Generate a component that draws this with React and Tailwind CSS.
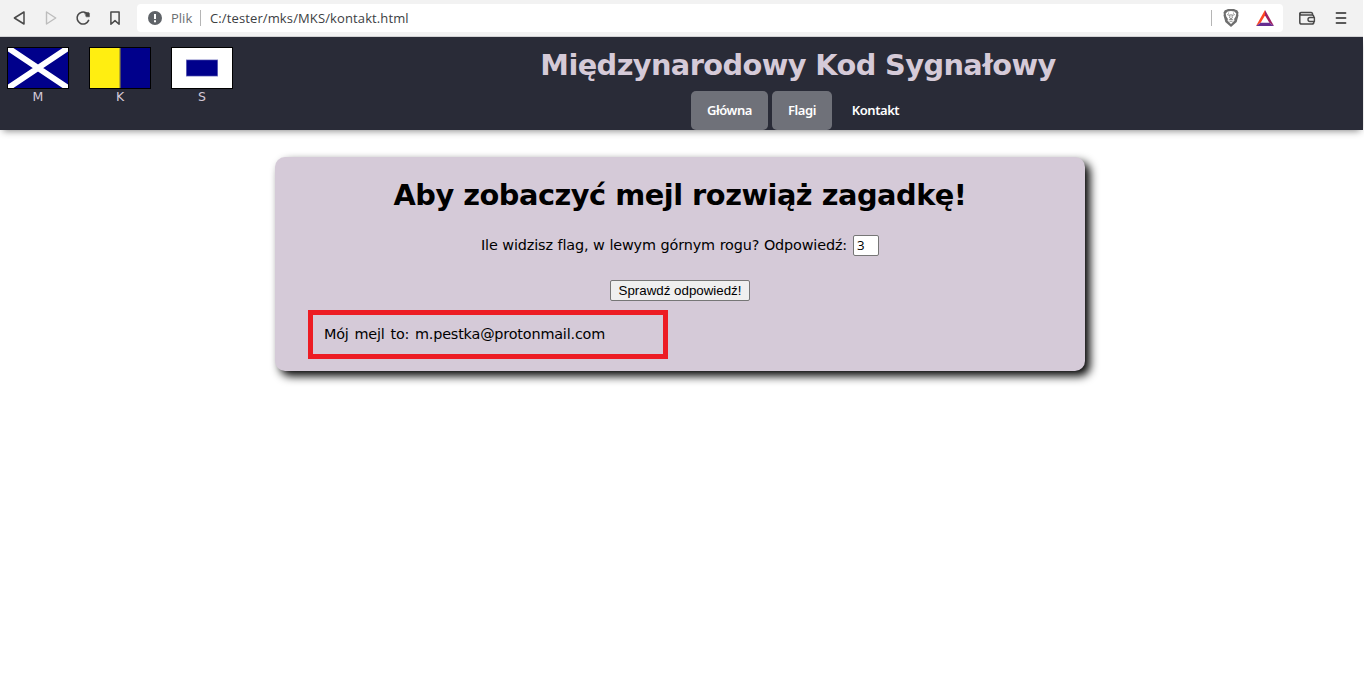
import React from "react";

function BrowserBar() {
  return (
    <div className="flex h-[37px] items-start border-b border-[#d4d4d6] bg-[#f2f2f2] pt-1 font-['Open_Sans',sans-serif] text-[#3c4043]">
      <div className="flex h-7 w-[137px] shrink-0 items-center">
        <svg width="137" height="28" viewBox="0 4 137 28" fill="none" strokeLinejoin="round" strokeLinecap="round">
          <path d="M24 12v12l-9.6-6z" stroke="#4a4a4a" strokeWidth="1.5" />
          <path d="M46.5 12v12l9.2-6z" stroke="#bdbdbd" strokeWidth="1.4" />
          <path d="M88.6 20.4A6 6 0 1 1 86.2 12.9" stroke="#4a4a4a" strokeWidth="1.6" />
          <path d="M85 12.8l3.6-.4.8.8v3.6h-3z" fill="#4a4a4a" stroke="#4a4a4a" strokeWidth=".6" />
          <path d="M110.9 12.1h8.2v12.2l-4.1-3.7-4.1 3.7z" stroke="#4a4a4a" strokeWidth="1.5" />
        </svg>
      </div>
      <div className="flex h-7 w-[1146px] shrink-0 items-center rounded bg-white">
        <svg className="ml-[11px] shrink-0" width="14" height="14" viewBox="0 0 14 14">
          <circle cx="7" cy="7" r="7" fill="#5f6368" />
          <path d="M6 3h2v5H6zM6 9.3h2v2H6z" fill="#fff" />
        </svg>
        <span className="ml-[9px] w-[29px] shrink-0 whitespace-nowrap text-[13px] leading-7 text-[#6b6f73]">Plik</span>
        <span className="h-4 w-px shrink-0 bg-[#b5b5b5]" />
        <span className="ml-[9px] whitespace-nowrap text-[13px] leading-7 tracking-[0.12px]">C:/tester/mks/MKS/kontakt.html</span>
        <span className="ml-auto h-4 w-px shrink-0 bg-[#b5b5b5]" />
        <svg className="ml-[11px] shrink-0" width="16" height="18" viewBox="0 0 16 18">
          <path d="M3.4.8L5 0h6l1.6.8 1.6.4 1.4 2.6-.5 1.3.4 1.2-1.8 6.8L8 18l-5.7-4.9L.5 6.3l.4-1.2-.5-1.3 1.4-2.6z" fill="#6e6e6e" />
          <path d="M4.7 2.6L8 2l3.3.6 2 2-.6 3-1.6 2.3.4 1.5L8 14.9l-3.5-3.5.4-1.5-1.6-2.3-.6-3z" fill="#fff" />
          <path d="M4.2 5.5l2.5 1M11.8 5.5l-2.5 1M7.2 5l-.5 4L8 10l1.3-1-.5-4M5.8 11L8 10l2.2 1M8 10v1M6.5 12.8L8 12l1.5.8M5 3.8l1 .7M11 3.8l-1 .7" stroke="#6e6e6e" strokeWidth=".75" fill="none" />
        </svg>
        <svg className="mr-[9px] ml-[17px] shrink-0" width="18" height="16" viewBox="0 0 18 16">
          <path d="M9 0v5.5L4.6 12.7 0 16z" fill="#ff4724" />
          <path d="M9 0l9 16-4.6-3.3L9 5.5z" fill="#9e1f63" />
          <path d="M0 16h18l-4.6-3.3H4.6z" fill="#662d91" />
        </svg>
      </div>
      <div className="flex h-7 grow items-center">
        <svg width="80" height="28" viewBox="1283 4 80 28" fill="none" strokeLinejoin="round">
          <path d="M1312.5 14.8v-1.2a1.4 1.4 0 0 0-1.4-1.1h-10.2a1.1 1.1 0 0 0-1.1 1.1v8.6a1.9 1.9 0 0 0 1.9 1.9h10.2a1.9 1.9 0 0 0 1.9-1.9v-5.5a1.7 1.7 0 0 0-1.7-1.7h-10.6a1.6 1.6 0 0 1-1.6-1.4" stroke="#4a4a4a" strokeWidth="1.5" />
          <path d="M1314.4 17.5h-4.4a2 2 0 0 0 0 4h4.4z" stroke="#4a4a4a" strokeWidth="1.4" fill="#f2f2f2" />
          <path d="M1336.5 13h9M1336.5 18h9M1336.5 23h9" stroke="#5a5a5a" strokeWidth="1.8" strokeLinecap="round" />
        </svg>
      </div>
    </div>
  );
}

function Flag({ label, children }) {
  return (
    <div className="flex w-[62px] flex-col items-center">
      <svg className="border border-black" width="62" height="42" viewBox="0 0 60 40">
        {children}
      </svg>
      <span className="text-[12.5px] leading-4 text-[#d5cad8]">{label}</span>
    </div>
  );
}

function Header() {
  return (
    <header className="relative flex h-[93px] bg-[#292b37] shadow-[0_4px_7px_-3px_#888]">
      <div className="flex w-[233px] shrink-0 gap-5 pt-[10px] pl-[7px]">
        <Flag label="M">
          <path d="M0 0h60v40H0z" fill="#00008b" />
          <path d="M0 0l60 40M60 0L0 40" stroke="#fff" strokeWidth="6" />
        </Flag>
        <Flag label="K">
          <path d="M0 0h60v40H0z" fill="#00008b" />
          <path d="M0 0h30v40H0z" fill="#ffee11" />
          <path d="M29.5 0h1.2v40h-1.2z" fill="#77704a" />
        </Flag>
        <Flag label="S">
          <path d="M0 0h60v40H0z" fill="#fff" />
          <path d="M14 11.5h32v17H14z" fill="#8080c5" />
          <path d="M14.7 12.2h30.6v15.6H14.7z" fill="#00008b" />
        </Flag>
      </div>
      <div className="flex grow flex-col items-center">
        <h1 className="mt-[10px] h-11 whitespace-nowrap text-[28.8px] leading-[37px] font-bold tracking-[-0.6px] text-[#d5cad8]">
          Międzynarodowy Kod Sygnałowy
        </h1>
        <nav className="ml-[10px] flex h-[39px] gap-1 font-['Noto_Sans',sans-serif] text-[13px] leading-[39px] font-semibold tracking-[-0.45px] text-white">
          <a className="w-[77px] rounded-[5px] bg-[#6f7179] text-center">Główna</a>
          <a className="w-[60px] rounded-[5px] bg-[#6f7179] text-center">Flagi</a>
          <a className="w-[79px] text-center">Kontakt</a>
        </nav>
      </div>
    </header>
  );
}

export default function App() {
  return (
    <div className="h-[696px] w-[1364px] overflow-hidden bg-white pr-px font-['DejaVu_Sans',sans-serif]">
      <BrowserBar />
      <Header />
      <main className="mt-[27px] ml-[275px] flex h-[214px] w-[810px] flex-col items-center rounded-[10px] bg-[#d5cad8] text-[14.4px] tracking-[-0.15px] text-black shadow-[5px_5px_10px_#000]">
        <h2 className="mt-5 h-9 whitespace-nowrap text-[28.8px] leading-[37px] font-bold tracking-[-0.48px]">
          Aby zobaczyć mejl rozwiąż zagadkę!
        </h2>
        <label className="mt-[22px] flex h-[21px] items-center gap-[6px] whitespace-nowrap">
          <span className="[word-spacing:0.3px]">Ile widzisz flag, w lewym górnym rogu? Odpowiedź:</span>
          <input
            className="h-[21px] w-[26px] rounded-[2px] border border-[#767676] bg-white px-[3px] pb-[2px] font-['Open_Sans',sans-serif] text-[13.3px] leading-[17px]"
            defaultValue="3"
          />
        </label>
        <button className="mt-6 h-[21px] w-[140px] rounded-[2px] border border-[#767676] bg-[#efefef] font-['Liberation_Sans',sans-serif] text-[13.33px] leading-[19px] tracking-normal whitespace-nowrap">
          Sprawdź odpowiedź!
        </button>
        <div className="mt-[9px] ml-[33px] flex h-[49px] w-[360px] items-center self-start border-[5px] border-[#ed1c24] pl-[11px] tracking-[-0.18px] whitespace-nowrap [word-spacing:1.4px]">
          Mój mejl to: m.pestka@protonmail.com
        </div>
      </main>
    </div>
  );
}
